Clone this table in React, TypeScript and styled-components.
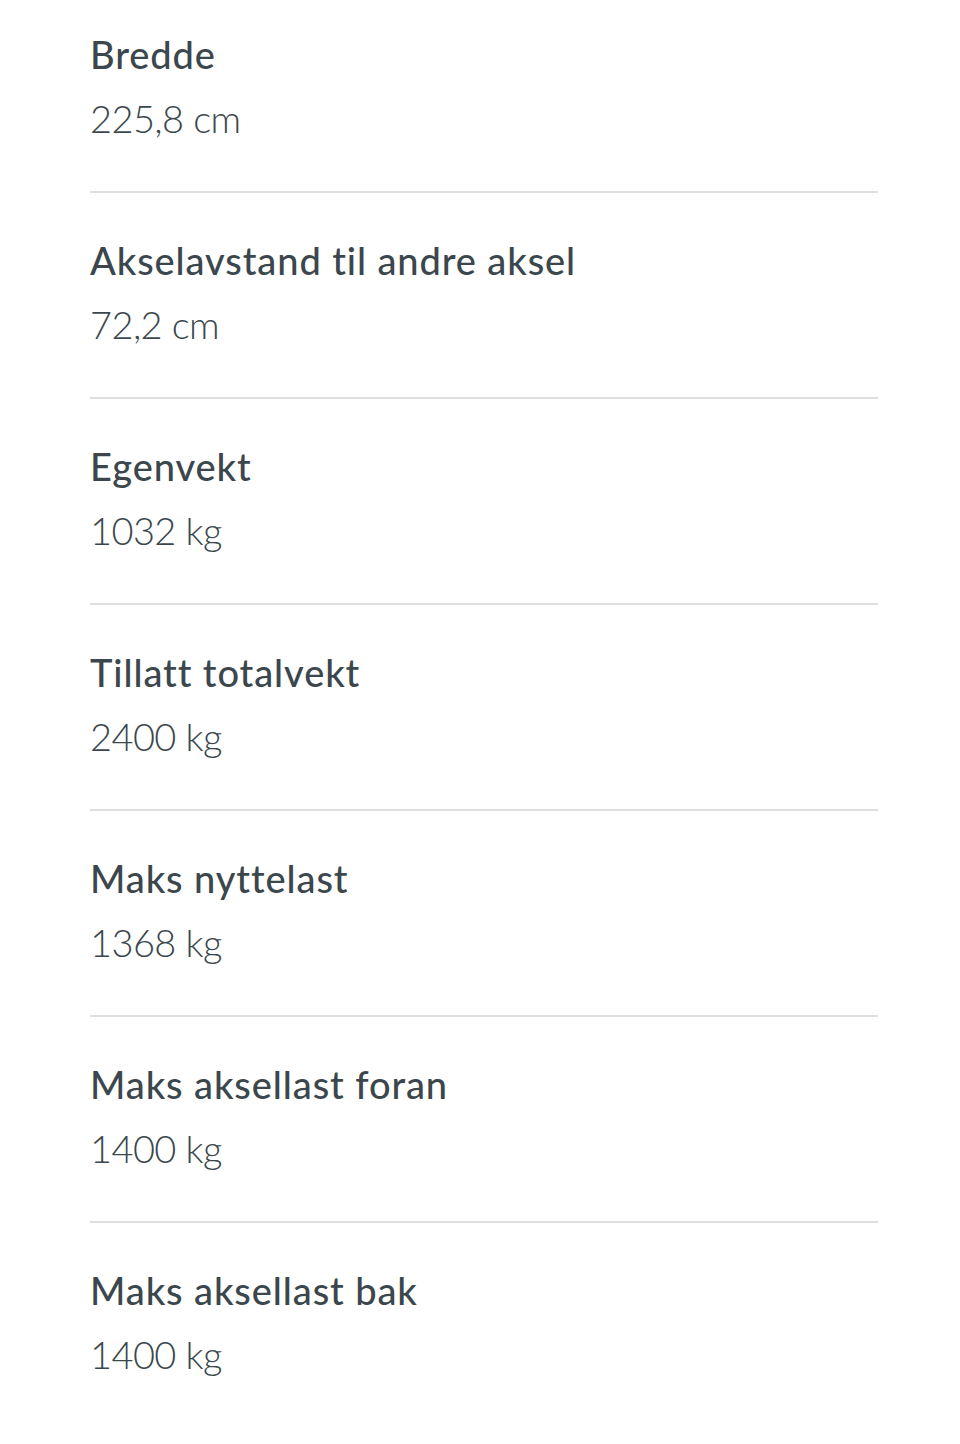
import React from 'react';
import styled, { createGlobalStyle } from 'styled-components';

interface Spec {
  label: string;
  value: string;
}

const specs: Spec[] = [
  { label: 'Bredde', value: '225,8 cm' },
  { label: 'Akselavstand til andre aksel', value: '72,2 cm' },
  { label: 'Egenvekt', value: '1032 kg' },
  { label: 'Tillatt totalvekt', value: '2400 kg' },
  { label: 'Maks nyttelast', value: '1368 kg' },
  { label: 'Maks aksellast foran', value: '1400 kg' },
  { label: 'Maks aksellast bak', value: '1400 kg' },
];

const App: React.FC = () => {
  return (
    <>
      <GlobalStyle />
      <SpecList>
        {specs.map((spec, index) => (
          <SpecRow key={index} first={index === 0} last={index === specs.length - 1}>
            <SpecLabel>{spec.label}</SpecLabel>
            <SpecValue>{spec.value}</SpecValue>
          </SpecRow>
        ))}
      </SpecList>
    </>
  );
};

export default App;

const GlobalStyle = createGlobalStyle`
  body {
    margin: 0;
    background: #ffffff;
    font-family: Lato, 'Open Sans', sans-serif;
  }
`;

const SpecList = styled.dl`
  display: flex;
  flex-direction: column;
  margin: 0;
  padding: 0 82px 0 90px;
`;

const SpecRow = styled.div<{ first?: boolean; last?: boolean }>`
  display: flex;
  flex-direction: column;
  gap: 18px;
  padding: ${(p) => (p.first ? '31px' : '44px')} 0 50px;
  border-bottom: ${(p) => (p.last ? 'none' : '2px solid #dcdedf')};
`;

const SpecLabel = styled.dt`
  margin: 0;
  font-size: 38px;
  line-height: 46px;
  font-weight: 500;
  letter-spacing: 0.9px;
  color: #3b474d;
`;

const SpecValue = styled.dd`
  margin: 0;
  font-size: 38px;
  line-height: 46px;
  font-weight: 300;
  letter-spacing: -0.6px;
  color: #3b474d;
`;
